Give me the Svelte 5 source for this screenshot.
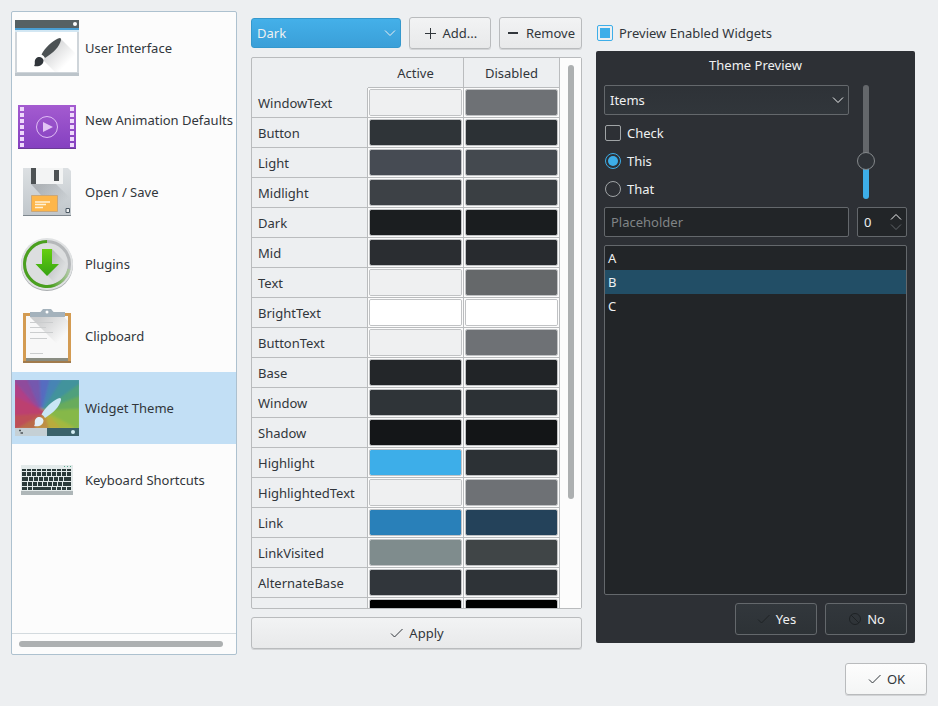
<script lang="ts">
	type Swatch = { name: string; active: string; disabled: string };

	const pages = [
		{ id: 'interface', label: 'User Interface' },
		{ id: 'animation', label: 'New Animation Defaults' },
		{ id: 'save', label: 'Open / Save' },
		{ id: 'plugins', label: 'Plugins' },
		{ id: 'clipboard', label: 'Clipboard' },
		{ id: 'theme', label: 'Widget Theme' },
		{ id: 'keyboard', label: 'Keyboard Shortcuts' }
	];

	const swatches: Swatch[] = [
		{ name: 'WindowText', active: '#eff0f1', disabled: '#6e7175' },
		{ name: 'Button', active: '#2f3438', disabled: '#2c3135' },
		{ name: 'Light', active: '#464b53', disabled: '#44494f' },
		{ name: 'Midlight', active: '#3d4146', disabled: '#3a3f43' },
		{ name: 'Dark', active: '#1b1e20', disabled: '#1a1d1f' },
		{ name: 'Mid', active: '#2a2d31', disabled: '#282b2f' },
		{ name: 'Text', active: '#eff0f1', disabled: '#65686a' },
		{ name: 'BrightText', active: '#ffffff', disabled: '#ffffff' },
		{ name: 'ButtonText', active: '#eff0f1', disabled: '#6e7175' },
		{ name: 'Base', active: '#232629', disabled: '#212427' },
		{ name: 'Window', active: '#2f3438', disabled: '#2c3135' },
		{ name: 'Shadow', active: '#141618', disabled: '#131517' },
		{ name: 'Highlight', active: '#3daee9', disabled: '#2c3135' },
		{ name: 'HighlightedText', active: '#eff0f1', disabled: '#6e7175' },
		{ name: 'Link', active: '#2980b9', disabled: '#24425a' },
		{ name: 'LinkVisited', active: '#7f8c8d', disabled: '#404547' },
		{ name: 'AlternateBase', active: '#31363b', disabled: '#2e3337' },
		{ name: '', active: '#000000', disabled: '#000000' }
	];

	// wedges of the widget theme icon, fanned round 28,36
	const wedges = [
		{ fill: '#b03f86', points: '0,4 0,22' },
		{ fill: '#8f4c9c', points: '0,4 14,4' },
		{ fill: '#7458ae', points: '14,4 26,4' },
		{ fill: '#566cc0', points: '26,4 36,4' },
		{ fill: '#4784b4', points: '36,4 48,4' },
		{ fill: '#43939c', points: '48,4 64,4 64,10' },
		{ fill: '#4fa07c', points: '64,10 64,22' },
		{ fill: '#68ab5c', points: '64,22 64,34' },
		{ fill: '#86b84a', points: '64,34 64,52 58,52' },
		{ fill: '#a3b840', points: '58,52 44,52' },
		{ fill: '#b9ab3e', points: '44,52 32,52' },
		{ fill: '#bd8e44', points: '32,52 18,52' },
		{ fill: '#b96c4a', points: '18,52 0,52' },
		{ fill: '#bd5058', points: '0,52 0,38' },
		{ fill: '#bc4070', points: '0,38 0,22' }
	];

	const holes = [19, 25, 31, 37, 43, 49, 55];

	const keyRows = [
		{ y: 21, h: 2, keys: [4, 4, 4, 4, 4, 4, 4, 4, 4, 4] },
		{ y: 24, h: 4, keys: [4, 4, 4, 4, 4, 4, 4, 4, 4, 4] },
		{ y: 29, h: 4, keys: [6, 4, 4, 4, 4, 4, 4, 4, 7] },
		{ y: 34, h: 4, keys: [5, 4, 4, 4, 4, 4, 4, 4, 8] },
		{ y: 39, h: 3, keys: [5, 4, 18, 4, 4, 4, 4] }
	].map((row) => {
		let x = 7;
		return { ...row, keys: row.keys.map((w) => ({ w, x: (x += w + 1) - w - 1 })) };
	});

	let page = $state('theme');
	let scheme = $state('Dark');
	let enabled = $state(true);
	let check = $state(false);
	let choice = $state('this');
	let level = $state(30);
	let count = $state(0);
	let selected = $state('B');
</script>

{#snippet brush(fill: string, tip: string)}
	<path {fill} d="M26.500 38.500C30 32 37 25 43 22.500Q46.500 21 46 24C44.500 31 38 37 30 42Q29 39.500 26.500 38.500Z" />
	<path fill={tip} d="M19 50C21 48 18.500 45 21 42.500C23.500 40 28 41 28.500 44.500C28.500 49 24 51 19 50Z" />
{/snippet}

{#snippet tick()}
	<svg class="icon" viewBox="0 0 16 16" aria-hidden="true">
		<path d="M2 8.500L5.500 12L13.500 4" />
	</svg>
{/snippet}

{#snippet chevron()}
	<svg class="chevron" viewBox="0 0 12 8" aria-hidden="true"><path d="M1 1.500L6 6.500L11 1.500" /></svg>
{/snippet}

<div class="dialog">
	<div class="columns">
		<nav class="pages" aria-label="Settings pages">
			<ul>
				{#each pages as { id, label }}
					<li>
						<button class="page" class:current={page === id} onclick={() => (page = id)}>
							<svg viewBox="0 0 64 64" aria-hidden="true">
								{#if id === 'interface'}
									<path fill="#cfd5da" d="M0 12h64v48H0z" />
									<path fill="#bcc4ca" d="M0 57h64v3H0z" />
									<path fill="#fff" d="M2 16h60v40H2z" />
									<path fill="#566164" d="M0 4h64v8H0z" />
									<path fill="#4a9fd4" d="M0 12h64v2H0z" />
									<path fill="#d3e7f3" d="M0 14h64v2H0z" />
									<circle cx="60" cy="8" r="2" fill="#fff" />
									<path fill="url(#shade)" d="M46 23L60 37V56H40L28 44L32 39Z" />
									{@render brush('#4c5254', '#31363b')}
								{:else if id === 'animation'}
									<path fill="url(#film)" d="M3 17h58v44H3z" />
									<path fill="#6b3b95" d="M3 60h58v1H3z" />
									{#each holes as y}
										<path fill="#eed8fb" d="M5 {y}h4v4H5zM55 {y}h4v4H55z" />
									{/each}
									<circle cx="32" cy="39" r="10.500" fill="none" stroke="#e0bdf5" />
									<path fill="#e2c3f5" d="M28 34L38 39L28 44Z" />
								{:else if id === 'save'}
									<path fill="url(#metal)" d="M8 8h45l3 3v45H8z" />
									<path fill="url(#fade)" d="M16 24h25l15 15v16H44z" />
									<path fill="#7e878e" d="M8 55h48v1H8z" />
									<path fill="#f3f4f4" d="M21 8h27v16H21z" />
									<path fill="#4d5254" d="M16 8h5v16h-5zM39 10h5v11h-5z" />
									<path fill="#fdb64a" stroke="#c9a77a" d="M16.500 35.500h26v16h-26z" />
									<path stroke="#fff1d6" stroke-width="1.500" d="M20 42h15M20 44.500h11M20 47.500h8" />
									<path fill="#eff0f1" stroke="#4b5863" d="M51 48.500h3.500v4H51z" />
								{:else if id === 'plugins'}
									<circle cx="32" cy="33" r="26" fill="#aaaeb0" />
									<circle cx="32" cy="32" r="26" fill="#e0e2e3" />
									<circle cx="32" cy="32" r="22.500" fill="#dcdedf" stroke="#b5b8ba" stroke-width="3" />
									<path fill="url(#fade)" d="M37 17L52 32A22 22 0 0 1 40 51L32 43Z" />
									<path fill="none" stroke="url(#ring)" stroke-width="3" d="M32 9.500A22.500 22.500 0 1 0 54 37" />
									<path fill="url(#arrow)" d="M27 17h10v15h7L32 44L20.500 32H27z" />
								{:else if id === 'clipboard'}
									<path fill="#d39b52" d="M8 9h48v50H8z" />
									<path fill="#a17b4d" d="M8 57h48v2H8z" />
									<path fill="#8a8d82" d="M11 54h42v3H11z" />
									<path fill="#f8f8f8" d="M11 12h42v42H11z" />
									<path fill="url(#fade)" d="M15 13h34l4 4v34z" />
									<path stroke="#cbcdce" d="M15 18.500h23M15 23.500h16M15 28.500h23M15 34.500h17M15 49.500h13" />
									<rect x="15" y="8" width="35" height="5" fill="#a4b2bc" />
									<path fill="#a4b2bc" d="M25 8.500L28 5H36L39 8.500Z" />
									<circle cx="32" cy="8" r="1.500" fill="#fff" />
								{:else if id === 'theme'}
									<g filter="url(#blend)" clip-path="url(#wallpaper)">
										{#each wedges as wedge}
											<polygon
												fill={wedge.fill}
												stroke={wedge.fill}
												stroke-width="3"
												points="28,36 {wedge.points}"
											/>
										{/each}
									</g>
									<path fill="#c5d0d5" d="M0 52h32v8H0z" />
									<path fill="#3b626a" d="M32 52h32v8H32z" />
									<path stroke="#4d5458" stroke-width="1.500" d="M4 54.500h2M5.500 57h2.500" />
									<circle cx="58" cy="56" r="2" fill="#d5eef4" />
									{@render brush('#c9e6f5', '#e1eff8')}
								{:else}
									<path fill="#e3eaea" d="M6 17h52v30H6z" />
									<path fill="#aeb6b8" d="M6 43h52v4H6z" />
									<path stroke="#58a98b" d="M49 18.500h1M52 18.500h1M55 18.500h1" />
									{#each keyRows as row}
										{#each row.keys as key}
											<rect x={key.x} y={row.y} width={key.w} height={row.h} fill="#2b3a3a" />
										{/each}
									{/each}
								{/if}
							</svg>
							<span>{label}</span>
						</button>
					</li>
				{/each}
			</ul>
			<div class="scroll-x"><div></div></div>
		</nav>

		<section class="scheme">
			<div class="toolbar">
				<div class="combo accent">
					<select bind:value={scheme} aria-label="Theme">
						<option>Dark</option>
					</select>
					{@render chevron()}
				</div>
				<button class="btn">
					<svg class="icon" viewBox="0 0 16 16" aria-hidden="true"><path d="M7.500 3v11M2 8.500h11" /></svg>
					Add...
				</button>
				<button class="btn">
					<svg class="icon thick" viewBox="0 0 16 16" aria-hidden="true"><path d="M2 8h10" /></svg>
					Remove
				</button>
			</div>

			<div class="palette">
				<div class="table-view">
					<table>
						<thead>
							<tr>
								<td></td>
								<th scope="col">Active</th>
								<th scope="col">Disabled</th>
							</tr>
						</thead>
						<tbody>
							{#each swatches as swatch}
								<tr>
									<th scope="row">{swatch.name}</th>
									<td>
										<input type="color" bind:value={swatch.active} aria-label="{swatch.name} active" />
									</td>
									<td>
										<input type="color" bind:value={swatch.disabled} aria-label="{swatch.name} disabled" />
									</td>
								</tr>
							{/each}
						</tbody>
					</table>
				</div>
				<div class="scroll-y"><div></div></div>
			</div>

			<button class="btn">{@render tick()} Apply</button>
		</section>

		<section class="preview">
			<label class="toggle">
				<input type="checkbox" bind:checked={enabled} />
				Preview Enabled Widgets
			</label>

			<div class="panel">
				<h2>Theme Preview</h2>
				<div class="controls">
					<div class="fields">
						<div class="combo">
							<select aria-label="Items">
								<option>Items</option>
							</select>
							{@render chevron()}
						</div>
						<label><input type="checkbox" bind:checked={check} /> Check</label>
						<label><input type="radio" bind:group={choice} value="this" /> This</label>
						<label><input type="radio" bind:group={choice} value="that" /> That</label>
					</div>
					<input class="slider" type="range" bind:value={level} aria-label="Level" />
					<input class="line-edit" type="text" placeholder="Placeholder" aria-label="Text" />
					<div class="spin">
						<input type="number" min="0" bind:value={count} aria-label="Count" />
						<div class="steps">
							<button aria-label="Increase" onclick={() => (count += 1)}>
								<svg viewBox="0 0 12 8" aria-hidden="true"><path d="M1 6.500L6 1.500L11 6.500" /></svg>
							</button>
							<button aria-label="Decrease" disabled={count <= 0} onclick={() => (count -= 1)}>
								<svg viewBox="0 0 12 8" aria-hidden="true"><path d="M1 1.500L6 6.500L11 1.500" /></svg>
							</button>
						</div>
					</div>
				</div>
				<ul class="items">
					{#each ['A', 'B', 'C'] as item}
						<li>
							<button class:selected={selected === item} onclick={() => (selected = item)}>{item}</button>
						</li>
					{/each}
				</ul>
				<div class="answers">
					<button class="btn dark">{@render tick()} Yes</button>
					<button class="btn dark">
						<svg class="icon" viewBox="0 0 16 16" aria-hidden="true">
							<circle cx="8" cy="8" r="5.500" /><path d="M4 4l8 8" />
						</svg>
						No
					</button>
				</div>
			</div>
		</section>
	</div>

	<footer>
		<button class="btn primary">{@render tick()} OK</button>
	</footer>
</div>

<svg class="defs" width="0" height="0" aria-hidden="true">
	<defs>
		<linearGradient id="shade" x1="0" y1="0" x2="1" y2="1">
			<stop offset=".2" stop-color="#31363b" stop-opacity=".22" />
			<stop offset=".75" stop-color="#31363b" stop-opacity="0" />
		</linearGradient>
		<linearGradient id="fade" x1="0" y1="0" x2="1" y2="1">
			<stop offset=".15" stop-color="#31363b" stop-opacity=".22" />
			<stop offset=".7" stop-color="#31363b" stop-opacity="0" />
		</linearGradient>
		<linearGradient id="film" x1="0" y1="0" x2="0" y2="1">
			<stop offset="0" stop-color="#a45bd0" />
			<stop offset="1" stop-color="#8440c0" />
		</linearGradient>
		<linearGradient id="metal" x1="0" y1="0" x2="0" y2="1">
			<stop offset="0" stop-color="#dce0e3" />
			<stop offset="1" stop-color="#c0c6cb" />
		</linearGradient>
		<linearGradient id="ring" x1="0" y1="0" x2="1" y2="0">
			<stop offset=".6" stop-color="#4aa01e" />
			<stop offset="1" stop-color="#b0c8a4" />
		</linearGradient>
		<linearGradient id="arrow" x1="0" y1="0" x2="0" y2="1">
			<stop offset="0" stop-color="#66cf10" />
			<stop offset="1" stop-color="#36a312" />
		</linearGradient>
		<filter id="blend"><feGaussianBlur stdDeviation="1" /></filter>
		<clipPath id="wallpaper"><path d="M0 4h64v48H0z" /></clipPath>
	</defs>
</svg>

<style>
	:global(body) {
		background: #eff0f1;
	}

	.dialog {
		box-sizing: border-box;
		display: flex;
		flex-direction: column;
		gap: 8px;
		height: 100vh;
		min-height: 480px;
		padding: 11px;
		overflow: hidden;
		color: #31363b;
		background: #edeff1;
		font: 13px/20px 'Noto Sans', sans-serif;

		& *,
		& *::before {
			box-sizing: border-box;
		}

		& button,
		& input,
		& select {
			margin: 0;
			color: inherit;
			font: inherit;
		}
	}

	.defs {
		position: absolute;
	}

	.columns {
		flex: 1;
		display: grid;
		grid-template-columns: 226px 331px minmax(0, 1fr);
		grid-template-rows: minmax(0, 1fr);
		gap: 14px;
		min-height: 0;
		padding-right: 12px;
	}

	ul {
		margin: 0;
		padding: 0;
		list-style: none;
	}

	/* page list */
	.pages {
		display: flex;
		flex-direction: column;
		border: 1px solid #adc1cf;
		border-radius: 2px;
		background: #fcfcfc;

		& ul {
			flex: 1;
			min-height: 0;
			overflow: hidden;
		}
	}

	.page {
		display: flex;
		align-items: center;
		gap: 6px;
		width: 100%;
		height: 72px;
		padding: 0 3px;
		border: 0;
		background: none;
		text-align: left;
		white-space: nowrap;

		&.current {
			background: #c2dff5;
		}

		& svg {
			flex: none;
			width: 64px;
			height: 64px;
		}
	}

	.scroll-x {
		padding: 7px 13px 7px 7px;
		border-top: 1px solid #d3dade;

		& div {
			height: 6px;
			border-radius: 3px;
			background: #adb0b1;
		}
	}

	/* buttons and combo boxes */
	.btn {
		display: flex;
		align-items: center;
		justify-content: center;
		gap: 4px;
		min-width: 82px;
		height: 32px;
		padding: 0 6px;
		border: 1px solid #b9bbbd;
		border-radius: 3px;
		background: linear-gradient(#f2f3f4, #e8e9ea);
		box-shadow: 0 1px 0 #d2d4d6;
		white-space: nowrap;

		&.primary {
			background: linear-gradient(#fdfdfd, #f4f5f5);
		}

		&.dark {
			border-color: #64686c;
			background: linear-gradient(#32373c, #2d3236);
			box-shadow: none;

			& .icon {
				stroke: #1e2225;
			}
		}
	}

	.icon {
		flex: none;
		width: 16px;
		height: 16px;
		fill: none;
		stroke: #31363b;

		&.thick {
			stroke-width: 2;
		}
	}

	.chevron {
		position: absolute;
		top: 11px;
		right: 5px;
		width: 12px;
		height: 8px;
		fill: none;
		stroke: #eff0f1;
		pointer-events: none;
	}

	.combo {
		position: relative;

		& select {
			display: block;
			width: 100%;
			height: 30px;
			padding: 0 5px;
			appearance: none;
			border: 1px solid #64686c;
			border-radius: 2px;
			background: linear-gradient(#2e3237, #31363b);
		}

		&.accent select {
			color: #eff0f1;
			border-color: #3498cd;
			border-radius: 3px;
			background: linear-gradient(#44b0e9, #3a9fd8);
		}
	}

	/* colour scheme */
	.scheme {
		display: flex;
		flex-direction: column;
		gap: 8px;
		padding: 6px 0;
	}

	.toolbar {
		display: flex;
		align-items: center;
		gap: 8px;

		& .combo {
			flex: 1;
		}
	}

	.palette {
		flex: 1;
		display: flex;
		min-height: 0;
		border: 1px solid #b9bbbd;
		border-radius: 2px;
	}

	.table-view {
		flex: 1;
		overflow: hidden;
	}

	table {
		width: 100%;
		table-layout: fixed;
		border-spacing: 0;

		& tr {
			height: 30px;
		}

		& th,
		& td {
			height: 30px;
			padding: 0;
			border: solid #babcbe;
			border-width: 0 1px 1px 0;
			font-weight: 400;
		}

		& thead td {
			width: 116px;
			border: 0;
		}

		& tbody th {
			padding-left: 6px;
			text-align: left;
		}

		& tbody td {
			padding: 1px;
			background: #fcfcfc;
		}

		& input {
			display: block;
			width: 100%;
			height: 27px;
			padding: 0;
			appearance: none;
			border: 1px solid #c0c2c4;
			border-radius: 2px;
			background: none;
		}

		& input::-webkit-color-swatch-wrapper {
			padding: 0;
		}

		& input::-webkit-color-swatch {
			border: 0;
			border-radius: 1px;
		}
	}

	.scroll-y {
		padding: 7px 7px 7px 8px;
		background: #fcfcfc;

		& div {
			width: 6px;
			height: 81%;
			border-radius: 3px;
			background: #adb0b1;
		}
	}

	/* preview */
	.preview {
		display: flex;
		flex-direction: column;
		padding: 6px 0 12px;

		& label {
			display: flex;
			align-items: center;
			gap: 6px;
			height: 20px;
			padding-left: 1px;
		}

		& .toggle {
			height: 34px;
			padding-bottom: 2px;
		}
	}

	input[type='checkbox'],
	input[type='radio'] {
		display: grid;
		flex: none;
		width: 16px;
		height: 16px;
		appearance: none;
		border: 1px solid #a0a4a6;
		border-radius: 2px;

		&:checked {
			border-color: #3daee9;
		}

		&:checked::before {
			content: '';
			margin: 2px;
			background: #3daee9;
		}
	}

	input[type='radio'],
	input[type='radio']::before {
		border-radius: 50%;
	}

	.panel {
		flex: 1;
		display: flex;
		flex-direction: column;
		gap: 8px;
		min-height: 0;
		padding: 0 8px 8px;
		border-radius: 2px;
		color: #eff0f1;
		background: #2d3035;

		& h2 {
			margin: 0;
			padding-top: 2px;
			font: inherit;
			line-height: 24px;
			text-align: center;
		}
	}

	.controls {
		display: grid;
		grid-template-columns: minmax(0, 1fr) 50px;
		gap: 8px;
	}

	.fields {
		display: grid;
		gap: 8px;
	}

	.slider {
		width: 18px;
		height: 114px;
		appearance: none;
		background: none;
		writing-mode: vertical-lr;
		direction: rtl;

		&::-webkit-slider-runnable-track {
			width: 6px;
			border-radius: 3px;
			background: linear-gradient(to top, #3daee9 33%, #64676b 33%);
		}

		&::-webkit-slider-thumb {
			width: 18px;
			height: 18px;
			margin-left: -6px;
			appearance: none;
			border: 1px solid #85898c;
			border-radius: 50%;
			background: #2f3338;
		}
	}

	.line-edit,
	.spin,
	.items {
		border: 1px solid #64686c;
		border-radius: 2px;
		background: #222528;
	}

	.line-edit {
		width: 100%;
		height: 30px;
		padding: 0 6px;

		&::placeholder {
			color: #808486;
		}
	}

	.spin {
		display: flex;
		height: 30px;

		& input {
			flex: 1;
			min-width: 0;
			padding: 0 0 0 6px;
			appearance: textfield;
			border: 0;
			background: none;
		}
	}

	.steps {
		display: flex;
		flex-direction: column;
		justify-content: center;
		gap: 2px;
		padding-right: 4px;

		& button {
			display: block;
			height: 8px;
			padding: 0;
			border: 0;
			background: none;
		}

		& svg {
			display: block;
			width: 12px;
			height: 8px;
			fill: none;
			stroke: #eff0f1;
		}

		& button:disabled svg {
			stroke: #606468;
		}
	}

	.items {
		flex: 1;
		min-height: 0;
		overflow: hidden;

		& button {
			display: block;
			width: 100%;
			height: 24px;
			padding: 0 3px;
			border: 0;
			background: none;
			text-align: left;
		}

		& .selected {
			background: #224e66;
		}
	}

	.answers,
	footer {
		display: flex;
		justify-content: flex-end;
		gap: 8px;
	}
</style>
